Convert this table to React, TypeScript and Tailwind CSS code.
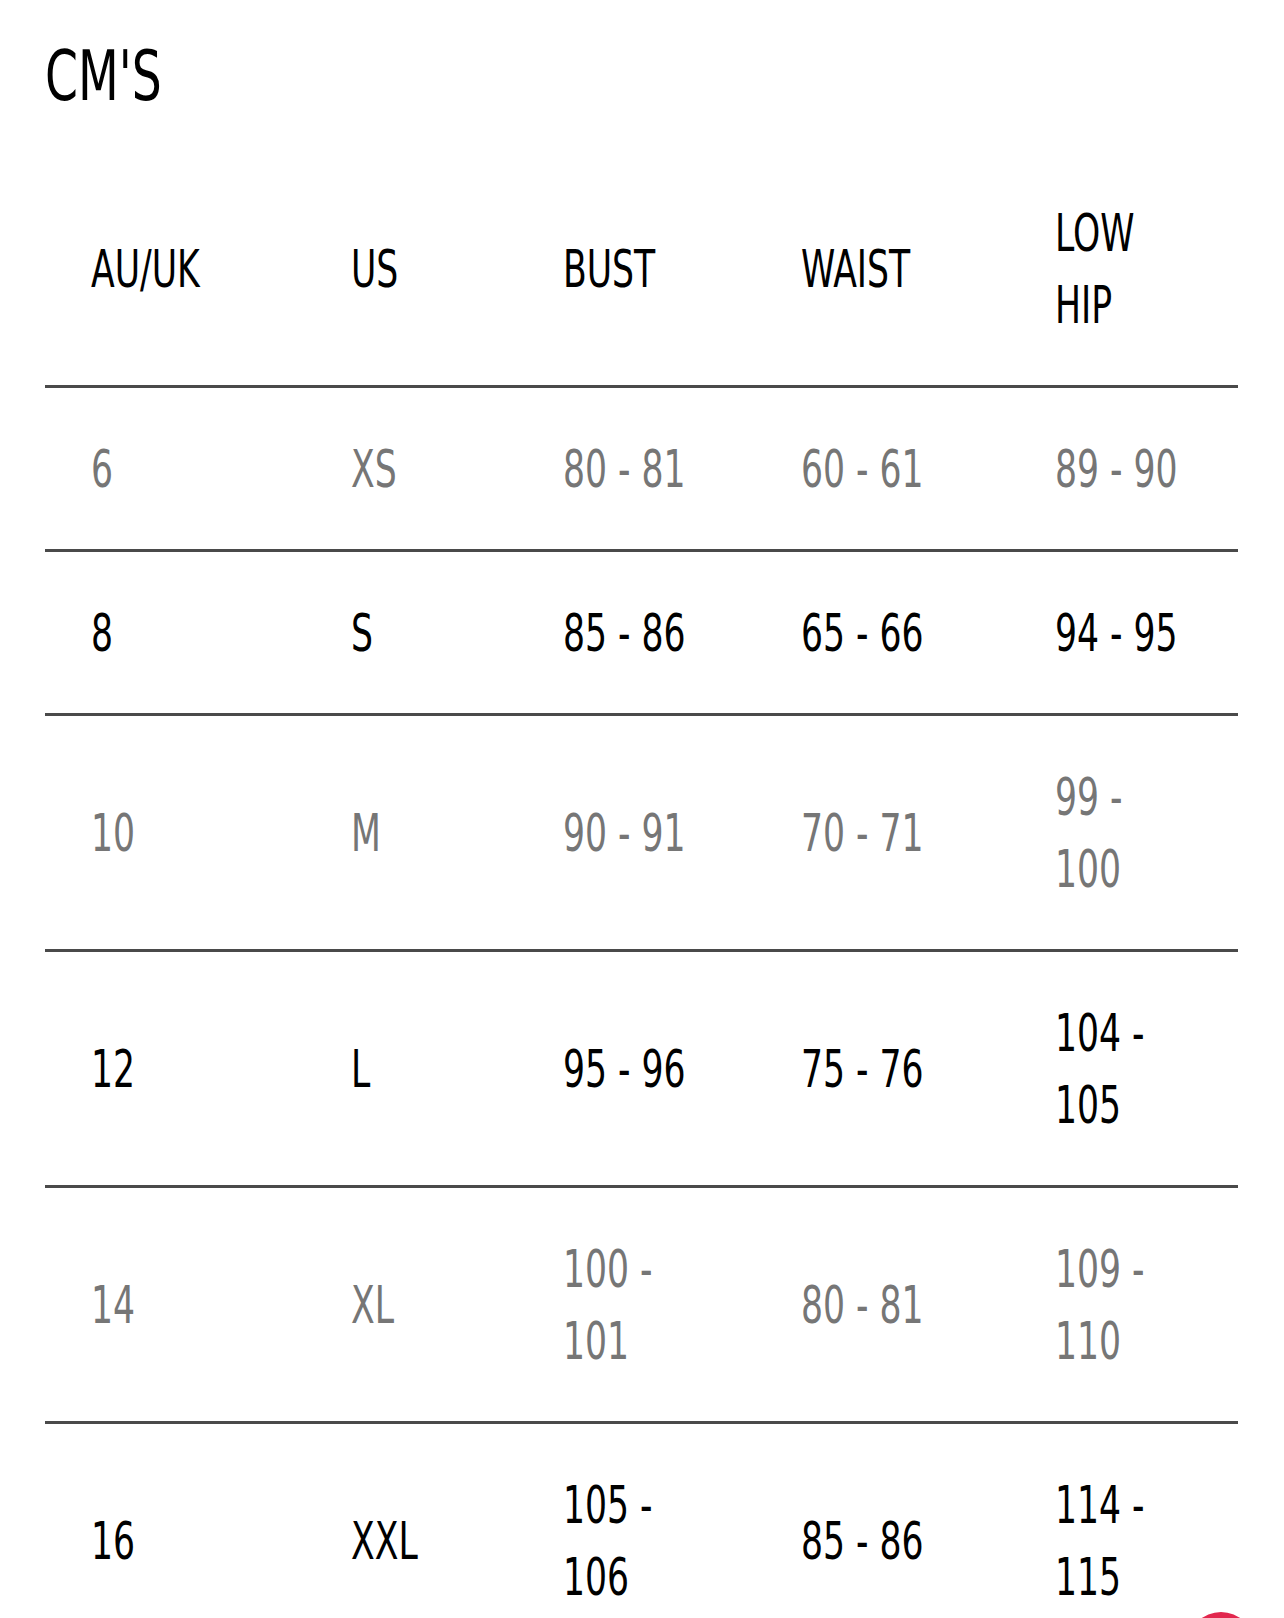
import React from 'react';

type Row = {
  cells: string[][];
  muted: boolean;
};

const headers: string[][] = [['AU/UK'], ['US'], ['BUST'], ['WAIST'], ['LOW', 'HIP']];

const rows: Row[] = [
  { cells: [['6'], ['XS'], ['80 - 81'], ['60 - 61'], ['89 - 90']], muted: true },
  { cells: [['8'], ['S'], ['85 - 86'], ['65 - 66'], ['94 - 95']], muted: false },
  { cells: [['10'], ['M'], ['90 - 91'], ['70 - 71'], ['99 -', '100']], muted: true },
  { cells: [['12'], ['L'], ['95 - 96'], ['75 - 76'], ['104 -', '105']], muted: false },
  { cells: [['14'], ['XL'], ['100 -', '101'], ['80 - 81'], ['109 -', '110']], muted: true },
  { cells: [['16'], ['XXL'], ['105 -', '106'], ['85 - 86'], ['114 -', '115']], muted: false },
];

// condensed display face, narrowed a bit further to read like the original
const font = "font-['DejaVu_Sans_Condensed','Liberation_Sans',sans-serif]";

const Cell = ({ lines }: { lines: string[] }) => (
  <div className="flex flex-col justify-center pl-[46px]">
    {lines.map((line, i) => (
      <span key={i} className="block origin-left scale-x-[0.74] whitespace-nowrap">
        {line}
      </span>
    ))}
  </div>
);

export default function App() {
  return (
    <div className={`relative min-h-[1618px] w-[1284px] overflow-hidden bg-white ${font}`}>
      <div className="pl-[45px] pt-[41px]">
        <h1 className="origin-left scale-x-[0.75] text-[70px] leading-none text-black">CM'S</h1>
      </div>

      {/* Size table */}
      <div className="mt-[40px] ml-[45px] w-[1193px] text-[52px] leading-[72px]">
        <div className="grid grid-cols-[260px_212px_238px_254px_229px] border-b-[3px] border-[#4a4a4a] pt-[46px] pb-[44px] text-black">
          {headers.map((h, i) => (
            <Cell key={i} lines={h} />
          ))}
        </div>

        {rows.map((row, r) => (
          <div
            key={r}
            className={`grid grid-cols-[260px_212px_238px_254px_229px] border-b-[3px] border-[#4a4a4a] pt-[45px] pb-[44px] ${
              row.muted ? 'text-[#767676]' : 'text-black'
            }`}
          >
            {row.cells.map((c, i) => (
              <Cell key={i} lines={c} />
            ))}
          </div>
        ))}
      </div>

      {/* floating chat button, mostly off-screen */}
      <div className="absolute left-[1188px] top-[1612px] h-[66px] w-[66px] rounded-full bg-[#e2264d]" />
    </div>
  );
}
